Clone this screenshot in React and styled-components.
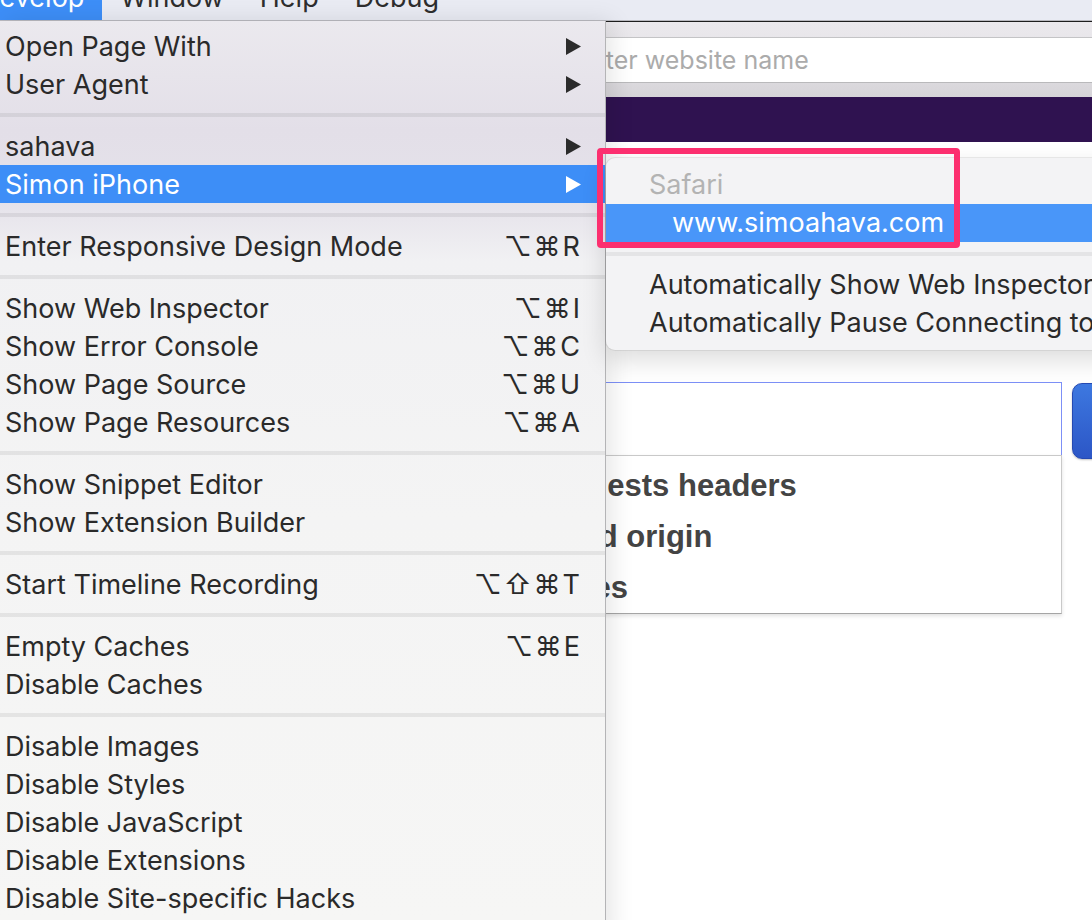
import React from 'react'
import styled, { createGlobalStyle } from 'styled-components'

const GlobalStyle = createGlobalStyle`
  html, body { margin: 0; padding: 0; }
  body {
    background: #fff;
    font-family: "Inter", "DejaVu Sans", sans-serif;
  }
`

const developItems = [
  { label: 'Open Page With', arrow: true },
  { label: 'User Agent', arrow: true },
  'sep',
  { label: 'sahava', arrow: true },
  { label: 'Simon iPhone', arrow: true, selected: true },
  'sep',
  { label: 'Enter Responsive Design Mode', keys: '⌥⌘R' },
  'sep',
  { label: 'Show Web Inspector', keys: '⌥⌘I' },
  { label: 'Show Error Console', keys: '⌥⌘C' },
  { label: 'Show Page Source', keys: '⌥⌘U' },
  { label: 'Show Page Resources', keys: '⌥⌘A' },
  'sep',
  { label: 'Show Snippet Editor' },
  { label: 'Show Extension Builder' },
  'sep',
  { label: 'Start Timeline Recording', keys: '⌥⇧⌘T' },
  'sep',
  { label: 'Empty Caches', keys: '⌥⌘E' },
  { label: 'Disable Caches' },
  'sep',
  { label: 'Disable Images' },
  { label: 'Disable Styles' },
  { label: 'Disable JavaScript' },
  { label: 'Disable Extensions' },
  { label: 'Disable Site-specific Hacks' },
]

const suggestions = ['allow requests headers', 'cors mixed origin', 'cors modes']

function Arrow({ light }) {
  return (
    <ArrowIcon width="17" height="19" viewBox="0 0 17 19">
      <polygon points="1,1 16,9.5 1,18" fill={light ? '#fff' : '#2b2b2b'} />
    </ArrowIcon>
  )
}

export default function App() {
  return (
    <>
      <GlobalStyle />
      <Screen>
        <MenuBar>
          <MenuTitle $active $first><span>Develop</span></MenuTitle>
          <MenuTitle><span>Window</span></MenuTitle>
          <MenuTitle><span>Help</span></MenuTitle>
          <MenuTitle><span>Debug</span></MenuTitle>
        </MenuBar>

        <BrowserWindow>
          <Toolbar>
            <AddressField>Enter website name</AddressField>
          </Toolbar>
          <SiteHeader />
          <Page>
            <SearchRow>
              <SearchColumn>
                <SearchInput />
                <SuggestList>
                  {suggestions.map((s) => (
                    <Suggestion key={s}>{s}</Suggestion>
                  ))}
                </SuggestList>
              </SearchColumn>
              <SearchButton />
            </SearchRow>
          </Page>
        </BrowserWindow>

        <DropMenu>
          {developItems.map((item, i) =>
            item === 'sep' ? (
              <Separator key={i} />
            ) : (
              <MenuItem key={i} $selected={item.selected}>
                <Label>{item.label}</Label>
                {item.keys && <Keys>{item.keys}</Keys>}
                {item.arrow && <Arrow light={item.selected} />}
              </MenuItem>
            )
          )}
        </DropMenu>

        <SubMenu>
          <SubItem $disabled>Safari</SubItem>
          <SubItem $selected $indent>www.simoahava.com</SubItem>
          <SubSeparator />
          <SubItem>Automatically Show Web Inspector for JSContexts</SubItem>
          <SubItem>Automatically Pause Connecting to JSContexts</SubItem>
        </SubMenu>

        <Highlight />
      </Screen>
    </>
  )
}

const Screen = styled.div`
  position: relative;
  width: 1092px;
  height: 920px;
  overflow: hidden;
  background: #fff;
`

const MenuBar = styled.div`
  display: flex;
  height: 20px;
  overflow: hidden;
  background: #e9ebf3;
  border-bottom: 1px solid #b9b9bf;
`

const MenuTitle = styled.div`
  height: 20px;
  padding: 0 18px;
  margin-left: ${(p) => (p.$first ? '-38px' : '0')};
  background: ${(p) => (p.$active ? '#3d8ef7' : 'transparent')};
  color: ${(p) => (p.$active ? '#fff' : '#2e2e2e')};
  font-size: 27px;
  span {
    display: block;
    line-height: 38px;
    margin-top: -21px;
    white-space: nowrap;
  }
`

const BrowserWindow = styled.div`
  display: flex;
  flex-direction: column;
  border-top: 1px solid #1e1e1e;
`

const Toolbar = styled.div`
  padding: 15px 0 14px 300px;
  background: linear-gradient(180deg, #ebe9ed 0%, #e6e4e8 40%, #d6d4d8 100%);
`

const AddressField = styled.div`
  height: 44px;
  line-height: 44px;
  padding-left: 275px;
  background: #fff;
  border-top: 1px solid #c4c4c6;
  border-bottom: 1px solid #b9b9bb;
  border-left: 1px solid #c4c4c6;
  border-radius: 5px 0 0 5px;
  color: #ababab;
  font-size: 25px;
  white-space: nowrap;
`

const SiteHeader = styled.div`
  height: 45px;
  background: #2f1250;
`

const Page = styled.div`
  padding: 240px 0 0 400px;
  background: #fff;
`

const SearchRow = styled.div`
  display: flex;
  align-items: flex-start;
  gap: 10px;
`

const SearchColumn = styled.div`
  flex: 0 0 662px;
  display: flex;
  flex-direction: column;
`

const SearchInput = styled.div`
  height: 72px;
  background: #fff;
  border: 1px solid #7d90f7;
  border-bottom: none;
`

const SuggestList = styled.div`
  padding-top: 4px;
  background: #fff;
  border: 1px solid #c9c9c9;
  border-bottom-color: #a5a5a5;
  box-shadow: 0 2px 4px rgba(0, 0, 0, 0.12);
`

const Suggestion = styled.div`
  height: 51px;
  line-height: 51px;
  padding-left: 53px;
  font-family: "Liberation Sans", Arial, sans-serif;
  font-weight: 700;
  font-size: 31px;
  color: #444;
  white-space: nowrap;
`

const SearchButton = styled.div`
  flex: 0 0 120px;
  height: 74px;
  margin-top: 1px;
  border-radius: 10px;
  border: 1px solid #2549b2;
  background: linear-gradient(180deg, #3d78e0 0%, #2c56c6 100%);
  box-shadow: 0 1px 2px rgba(0, 0, 0, 0.25);
`

const DropMenu = styled.div`
  position: absolute;
  top: 21px;
  left: 0;
  width: 606px;
  height: 920px;
  padding-top: 6px;
  box-sizing: border-box;
  border-right: 1px solid #b4b4b6;
  background: linear-gradient(
    180deg,
    #ebe9ee 0px,
    #e3dfe8 110px,
    #e5e2ea 180px,
    #f1f1f3 240px,
    #f4f4f4 500px,
    #f6f6f5 900px
  );
  box-shadow: 6px 0 22px rgba(0, 0, 0, 0.1);
  color: #2a2a2a;
  font-size: 27px;
`

const MenuItem = styled.div`
  display: flex;
  align-items: center;
  height: 38px;
  padding: 0 23px 0 5px;
  background: ${(p) => (p.$selected ? '#3d8ef7' : 'transparent')};
  color: ${(p) => (p.$selected ? '#fff' : 'inherit')};
`

const Label = styled.span`
  flex: 1;
  white-space: nowrap;
`

const Keys = styled.span`
  font-family: "Inter", "DejaVu Sans", sans-serif;
  letter-spacing: 2px;
  white-space: nowrap;
`

const ArrowIcon = styled.svg`
  display: block;
  flex-shrink: 0;
`

const Separator = styled.div`
  height: 4px;
  margin: 10px 0;
  background: rgba(0, 0, 0, 0.065);
`

const SubMenu = styled.div`
  position: absolute;
  top: 158px;
  left: 606px;
  width: 620px;
  padding: 8px 0;
  background: #f3f3f5;
  border-radius: 9px 0 0 9px;
  box-shadow: 0 10px 26px rgba(0, 0, 0, 0.14), 0 0 0 1px rgba(0, 0, 0, 0.07);
  color: #2a2a2a;
  font-size: 27px;
`

const SubItem = styled.div`
  height: 38px;
  line-height: 38px;
  padding-left: ${(p) => (p.$indent ? '66px' : '43px')};
  background: ${(p) => (p.$selected ? '#4996f9' : 'transparent')};
  color: ${(p) => (p.$selected ? '#fff' : p.$disabled ? '#b3b3b3' : 'inherit')};
  white-space: nowrap;
`

const SubSeparator = styled.div`
  height: 4px;
  margin: 10px 0;
  background: rgba(0, 0, 0, 0.06);
`

const Highlight = styled.div`
  position: absolute;
  top: 148px;
  left: 597px;
  width: 363px;
  height: 100px;
  box-sizing: border-box;
  border: 6px solid #fc2f6f;
  border-radius: 4px;
`
